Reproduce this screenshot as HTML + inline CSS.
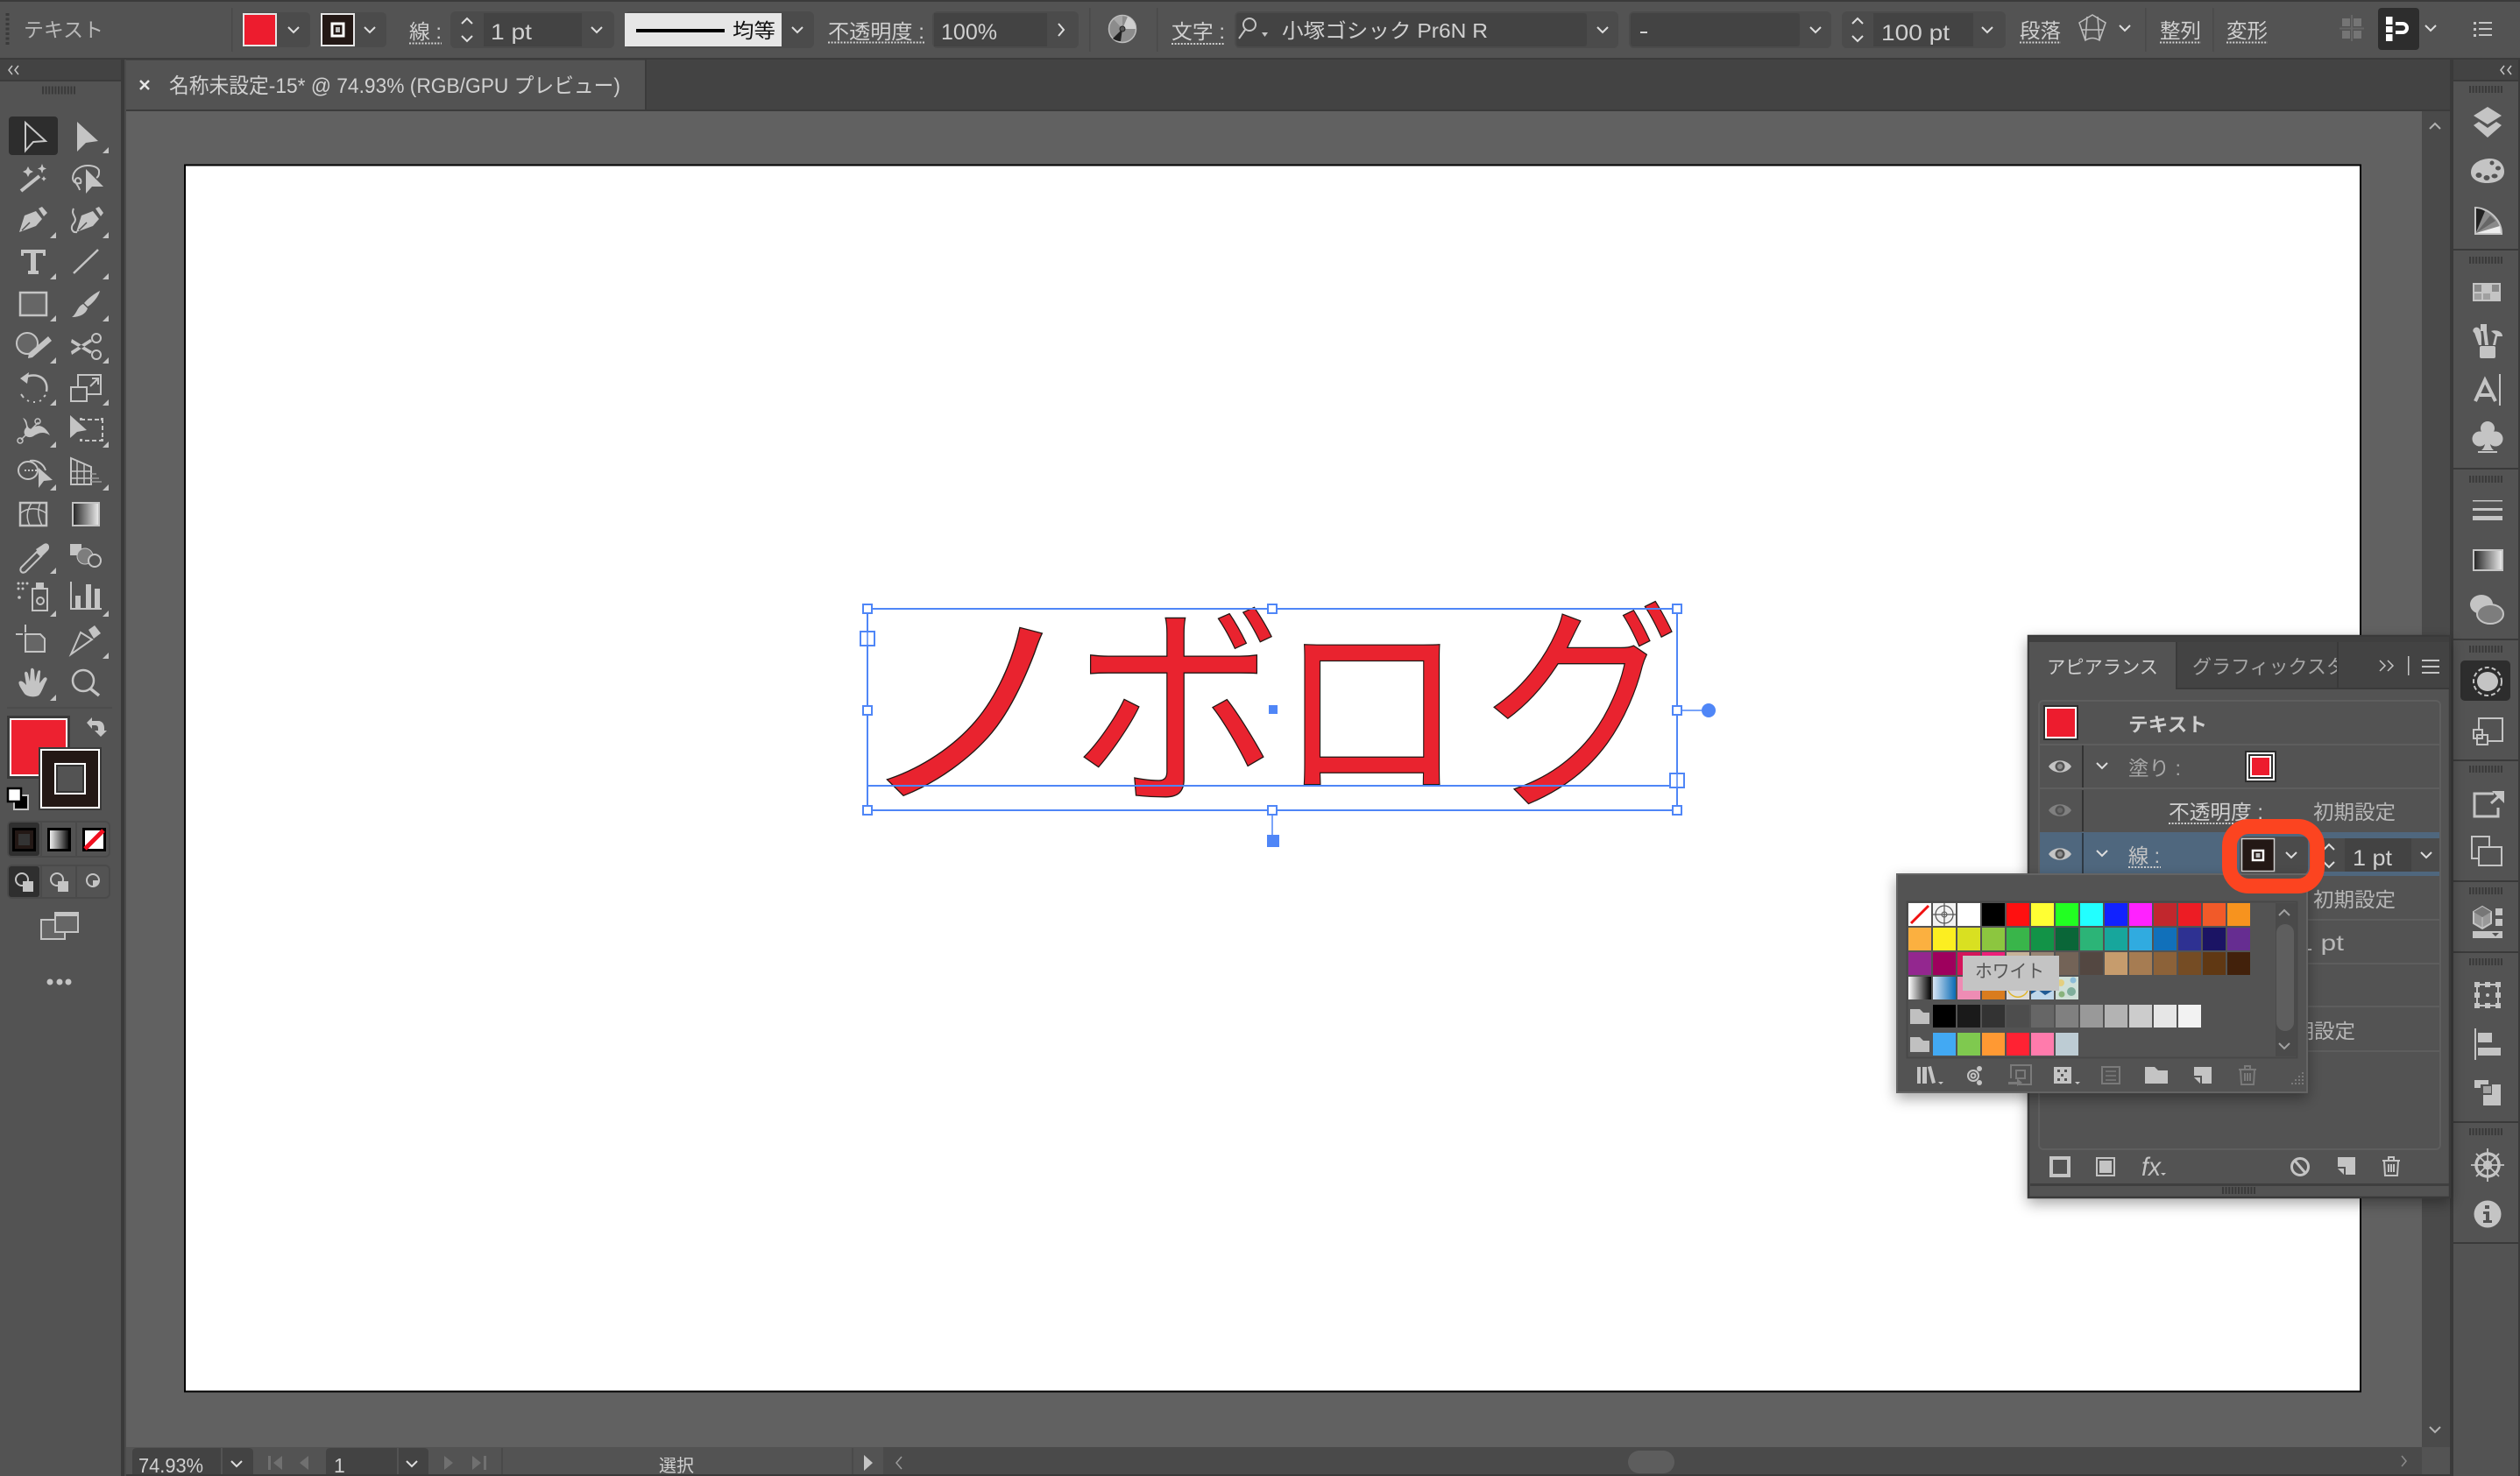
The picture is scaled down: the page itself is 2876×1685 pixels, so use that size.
<!DOCTYPE html>
<html lang="ja"><head><meta charset="utf-8"><title>Illustrator</title>
<style>
html,body{margin:0;padding:0;background:#535353;width:2876px;height:1685px;overflow:hidden}
svg{display:block}
text{font-family:"Liberation Sans","Noto Sans CJK JP",sans-serif;fill:#d0d0d0;font-size:23px}
.i{fill:#c4c4c4}
.s{fill:none;stroke:#c4c4c4;stroke-width:2}
.d{fill:none;stroke:#d0d0d0;stroke-width:2;stroke-dasharray:2 1.6}
.b{fill:#fff;stroke:#4f86f7;stroke-width:2}
.l{font-size:25px}
.k{fill:#e9232f;font-family:"Noto Sans CJK JP",sans-serif;font-size:231px;stroke:#231815;stroke-width:1.2}
</style></head><body>
<svg xmlns="http://www.w3.org/2000/svg" width="2876" height="1685" viewBox="0 0 2876 1685">
<defs>
<path id="cv" d="M-6 -3L0 3L6 -3" fill="none" stroke="#dedede" stroke-width="2"/>
<path id="cu" d="M-6 3L0 -3L6 3" fill="none" stroke="#dedede" stroke-width="2"/>
<path id="tr" d="M7 0V7H0Z" fill="#c4c4c4"/>
<g id="eye"><path d="M-13 0C-7 -9 7 -9 13 0C7 9 -7 9 -13 0Z" fill="#c4c4c4"/><circle r="5.5" fill="#535353"/><circle r="3" fill="#8c8c8c"/></g>
<linearGradient id="g1" x1="0" x2="1" y1="0" y2="0"><stop offset="0" stop-color="#222"/><stop offset="1" stop-color="#eee"/></linearGradient>
<linearGradient id="g2" x1="0" x2="1" y1="0" y2="0"><stop offset="0" stop-color="#fff"/><stop offset="1" stop-color="#000"/></linearGradient>
<linearGradient id="g3" x1="0" x2="1" y1="0" y2="0"><stop offset="0" stop-color="#d9e6f5"/><stop offset="1" stop-color="#0b6cb5"/></linearGradient>
<filter id="sh" x="-10%" y="-10%" width="120%" height="120%"><feDropShadow dx="0" dy="6" stdDeviation="8" flood-color="#000" flood-opacity=".35"/></filter>
<clipPath id="tab2"><rect x="2490" y="735" width="177" height="50"/></clipPath>
</defs>

<rect width="2876" height="1685" fill="#535353"/>
<rect width="2876" height="2" fill="#3b3b3b"/>
<rect y="66" width="2876" height="2" fill="#3b3b3b"/>
<!-- tab bar -->
<rect x="143" y="68" width="2653" height="57" fill="#434343"/>
<rect x="143" y="125" width="2653" height="2" fill="#3b3b3b"/>
<rect x="143" y="69" width="593" height="56" fill="#535353"/>
<rect x="736" y="68" width="2" height="57" fill="#3b3b3b"/>
<path d="M160 92L170 102M170 92L160 102" stroke="#e6e6e6" stroke-width="2.5" fill="none"/>
<text x="193" y="106" textLength="515" lengthAdjust="spacingAndGlyphs" style="font-size:24px">名称未設定-15* @ 74.93% (RGB/GPU プレビュー)</text>

<!-- canvas -->
<rect x="144" y="127" width="2620" height="1525" fill="#616161"/>
<rect x="2764" y="127" width="32" height="1525" fill="#4a4a4a"/>
<use href="#cu" x="2779" y="144" style="opacity:.7"/>
<use href="#cv" x="2779" y="1632" style="opacity:.7"/>
<rect x="211" y="188.5" width="2483" height="1400" fill="#fff" stroke="#000" stroke-width="2"/>

<!-- left panel -->
<rect x="0" y="68" width="138" height="1617" fill="#535353"/>
<rect x="0" y="68" width="138" height="23" fill="#434343"/>
<rect x="0" y="91" width="138" height="2" fill="#3b3b3b"/>
<rect x="138" y="68" width="4" height="1617" fill="#3a3a3a"/>
<rect x="142" y="68" width="2" height="1617" fill="#4b4b4b"/>
<path d="M14 75L10 80L14 85M21 75L17 80L21 85" fill="none" stroke="#c4c4c4" stroke-width="1.5"/>
<line x1="48" x2="86" y1="103" y2="103" stroke="#3a3a3a" stroke-width="9" stroke-dasharray="2 1.6"/>

<!-- top bar -->
<line x1="8.5" x2="8.5" y1="15" y2="52" stroke="#3a3a3a" stroke-width="4" stroke-dasharray="3 2.5"/>
<text x="27" y="42" textLength="91" lengthAdjust="spacingAndGlyphs" style="fill:#b8b8b8">テキスト</text>
<rect x="264" y="9" width="1.5" height="50" fill="#4a4a4a"/>
<rect x="276" y="14" width="78" height="40" rx="5" fill="#4b4b4b"/>
<rect x="278" y="16" width="37" height="36" fill="#ed1c2e" stroke="#e6e6e6" stroke-width="2"/>
<use href="#cv" x="335" y="34"/>
<rect x="365" y="14" width="76" height="40" rx="5" fill="#4b4b4b"/>
<rect x="367" y="16" width="37" height="36" fill="#231815" stroke="#e6e6e6" stroke-width="2"/>
<rect x="379" y="27" width="13" height="14" fill="none" stroke="#fff" stroke-width="3"/><rect x="383" y="31" width="5" height="6" fill="#bdbdbd"/>
<use href="#cv" x="422" y="34"/>
<text x="467" y="44" textLength="37" lengthAdjust="spacingAndGlyphs">線 :</text>
<line class="d" x1="467" x2="504" y1="49.5" y2="49.5"/>
<rect x="514" y="13" width="187" height="42" rx="6" fill="#4b4b4b"/>
<use href="#cu" x="533" y="24"/><use href="#cv" x="533" y="44"/>
<rect x="552" y="15" width="112" height="38" fill="#434343"/>
<text class="l" x="560" y="45" textLength="47" lengthAdjust="spacingAndGlyphs">1 pt</text>
<use href="#cv" x="681" y="34"/>
<rect x="713" y="13" width="216" height="42" rx="6" fill="#4b4b4b"/>
<rect x="713" y="15" width="179" height="38" fill="#e6e6e6"/>
<rect x="726" y="33" width="101" height="4" fill="#000"/>
<text x="836" y="43" textLength="49" lengthAdjust="spacingAndGlyphs" style="fill:#111">均等</text>
<use href="#cv" x="910" y="34"/>
<text x="945" y="44" textLength="110" lengthAdjust="spacingAndGlyphs">不透明度 :</text>
<line class="d" x1="945" x2="1055" y1="48.5" y2="48.5"/>
<rect x="1064" y="13" width="167" height="42" rx="6" fill="#4b4b4b"/>
<rect x="1066" y="15" width="129" height="38" fill="#434343"/>
<text class="l" x="1074" y="45" textLength="64" lengthAdjust="spacingAndGlyphs">100%</text>
<path d="M1208 27L1214 34L1208 41" fill="none" stroke="#dedede" stroke-width="2"/>
<rect x="1243" y="9" width="1.5" height="50" fill="#4a4a4a"/>
<circle cx="1281" cy="33" r="15.5" fill="#8c8c8c" stroke="#bdbdbd" stroke-width="1.5"/>
<path d="M1281 33L1287 19A15 15 0 0 1 1296 33Z" fill="#cfcfcf"/><path d="M1281 33L1270 44A15 15 0 0 0 1279 47Z" fill="#222"/><path d="M1281 33L1271 22A15 15 0 0 1 1281 18Z" fill="#a8a8a8"/>
<circle cx="1281" cy="33" r="3" fill="#555" stroke="#222"/>
<rect x="1320" y="9" width="1.5" height="50" fill="#4a4a4a"/>
<text x="1337" y="44" textLength="61" lengthAdjust="spacingAndGlyphs">文字 :</text>
<line class="d" x1="1337" x2="1398" y1="50" y2="50"/>
<rect x="1409" y="13" width="438" height="42" rx="6" fill="#4b4b4b"/>
<rect x="1411" y="15" width="400" height="38" rx="3" fill="#434343"/>
<circle cx="1426" cy="28" r="7" class="s"/><path d="M1421 34L1414 44" class="s"/><path d="M1440 37H1447L1443.5 42Z" class="i"/>
<text x="1463" y="43" textLength="235" lengthAdjust="spacingAndGlyphs">小塚ゴシック Pr6N R</text>
<use href="#cv" x="1829" y="34"/>
<rect x="1859" y="13" width="231" height="42" rx="6" fill="#4b4b4b"/>
<rect x="1861" y="15" width="193" height="38" rx="3" fill="#434343"/>
<rect x="1872" y="36" width="8" height="2" fill="#d4d4d4"/>
<use href="#cv" x="2072" y="34"/>
<rect x="2102" y="13" width="187" height="42" rx="6" fill="#4b4b4b"/>
<use href="#cu" x="2120" y="24"/><use href="#cv" x="2120" y="44"/>
<rect x="2138" y="15" width="114" height="38" fill="#434343"/>
<text class="l" x="2147" y="46" textLength="78" lengthAdjust="spacingAndGlyphs">100 pt</text>
<use href="#cv" x="2268" y="34"/>
<text x="2305" y="43" textLength="47" lengthAdjust="spacingAndGlyphs">段落</text>
<line class="d" x1="2305" x2="2352" y1="48.5" y2="48.5"/>
<g fill="none" stroke="#bcbcbc" stroke-width="1.6"><path d="M2373 26L2388 17L2403 26L2396 46Q2388 41 2380 46Z"/><path d="M2382 19L2380 45M2394 19L2396 45M2375 34H2401"/></g>
<use href="#cv" x="2425" y="32"/>
<rect x="2448" y="9" width="1.5" height="50" fill="#4a4a4a"/>
<text x="2465" y="43" textLength="47" lengthAdjust="spacingAndGlyphs">整列</text>
<line class="d" x1="2465" x2="2512" y1="48.5" y2="48.5"/>
<rect x="2525" y="9" width="1.5" height="50" fill="#4a4a4a"/>
<text x="2541" y="43" textLength="47" lengthAdjust="spacingAndGlyphs">変形</text>
<line class="d" x1="2541" x2="2588" y1="48.5" y2="48.5"/>
<g fill="#757575"><rect x="2673" y="21" width="9" height="9"/><rect x="2686" y="21" width="9" height="9"/><rect x="2673" y="35" width="9" height="9"/><rect x="2686" y="35" width="9" height="9"/><rect x="2670" y="31.5" width="28" height="2" fill="#666"/><rect x="2683" y="17" width="2" height="30" fill="#666"/></g>
<rect x="2714" y="9" width="47" height="48" rx="4" fill="#2d2d2d"/>
<g fill="#fff"><rect x="2723" y="19" width="7.5" height="9"/><rect x="2723" y="30" width="7.5" height="7"/><rect x="2723" y="39" width="7.5" height="8"/></g>
<path d="M2734 27H2742A5 5 0 0 1 2742 37H2734" fill="none" stroke="#fff" stroke-width="4"/>
<use href="#cv" x="2774" y="32"/>
<g fill="#c4c4c4"><rect x="2823" y="25" width="3" height="3"/><rect x="2823" y="32" width="3" height="3"/><rect x="2823" y="39" width="3" height="3"/><rect x="2829" y="25" width="15" height="2"/><rect x="2829" y="32" width="15" height="2"/><rect x="2829" y="39" width="15" height="2"/></g>

<!-- tools -->
<rect x="10" y="133" width="56" height="44" rx="4" fill="#2d2d2d"/>
<path d="M29 140L52 161L38 162L29 172Z" fill="none" stroke="#c8c8c8" stroke-width="2"/>
<path d="M88 139L112 161L98 163L88 173Z" class="i"/>
<!-- wand -->
<path d="M24 218L45 201" fill="none" stroke="#c4c4c4" stroke-width="4"/>
<path d="M32 190L34 194L38 196L34 198L32 202L30 198L26 196L30 194ZM48 187L49.5 191L53 192.5L49.5 194L48 198L46.5 194L43 192.5L46.5 191ZM50 201L51 203L53 204L51 205L50 207L49 205L47 204L49 203Z" class="i"/>
<!-- lasso -->
<path d="M83 204C83 194 92 189 100 189C108 189 114 192 113 197C113 200 112 202 110 203" class="s"/>
<path d="M83 204C84 209 88 210 92 209C94 204 88 201 86 205C85 209 90 212 91 217" class="s"/>
<path d="M98 193L118 213L105 213L98 221Z" class="i"/>
<!-- pen -->
<path d="M22 265L28 246L41 241L48 250L41 258Z" class="i"/><path d="M44 238L48 236L54 243L50 247Z" class="i"/><path d="M25 263L34 254" stroke="#535353" stroke-width="1.5"/>
<path d="M87 265L93 246L106 241L113 250L106 258Z" class="i"/><path d="M109 238L113 236L118 243L115 247Z" class="i"/><path d="M84 238C80 246 90 248 84 255C80 260 82 266 88 265" class="s"/><path d="M90 263L99 254" stroke="#535353" stroke-width="1.5"/>
<!-- type -->
<path d="M24 285H52V292H49V289H41V309H44V313H32V309H35V289H27V292H24Z" class="i"/>
<path d="M84 312L112 285" fill="none" stroke="#c4c4c4" stroke-width="2.5"/>
<!-- rect / brush -->
<rect x="23" y="334" width="30" height="26" fill="#666" stroke="#c4c4c4" stroke-width="2.5"/>
<path d="M114 332C112 340 104 348 100 350L96 346C100 341 108 335 114 332Z" class="i"/><path d="M95 347L100 352C98 358 92 362 82 362C88 358 88 350 95 347Z" class="i"/>
<!-- blob / scissors -->
<circle cx="31" cy="392" r="12" fill="#666" stroke="#c4c4c4" stroke-width="2"/>
<path d="M32 409L33 403L55 384L59 389L37 408Z" class="i"/>
<circle cx="110" cy="386" r="5" class="s"/><circle cx="110" cy="405" r="5" class="s"/>
<path d="M82 387L105 401L103 404L81 391ZM82 405L105 390L103 387L81 401Z" class="i"/>
<!-- rotate / scale -->
<path d="M28 431C42 424 56 432 53 447" class="s" style="stroke-width:2.5"/><path d="M23 432L33 425L31 438Z" class="i"/>
<path d="M24 450L27 454M31 457L33 458M38 459H40M45 458L47 457M50 453L52 451" fill="none" stroke="#c4c4c4" stroke-width="2"/>
<path d="M89 442V428H115V450H100" class="s"/><rect x="81" y="442" width="18" height="16" class="s"/><path d="M103 441L111 433M105 432H112V439" class="s"/>
<!-- warp / free transform -->
<path d="M26 477C34 480 28 488 36 490C42 484 50 484 57 497C50 492 44 494 38 498C30 502 24 494 30 488C30 484 28 480 26 477Z" class="i"/>
<path d="M24 502L44 482" class="s" style="stroke-width:1.5"/><circle cx="23" cy="503" r="3" class="s" style="stroke-width:1.5"/><circle cx="43" cy="481" r="3" class="s" style="stroke-width:1.5"/>
<path d="M80 474L99 491L88 493L80 500Z" class="i"/>
<path d="M92 479H117V503H92" class="s" stroke-dasharray="5 3"/><g class="i"><rect x="91" y="477" width="3" height="3"/><rect x="115" y="477" width="3" height="3"/><rect x="115" y="501" width="3" height="3"/><rect x="91" y="501" width="3" height="3"/></g>
<!-- shape builder / persp -->
<ellipse cx="32" cy="537" rx="11" ry="10" class="s"/><path d="M34 526A16 16 0 0 1 52 537" class="s"/><path d="M28 537H44" stroke="#c4c4c4" stroke-width="2" stroke-dasharray="2 2"/>
<path d="M44 534L60 548L50 549L44 557Z" class="i"/>
<path d="M81 523L104 533V553L81 553Z" class="s"/><path d="M88 526V553M96 530V553M81 538H104M81 546H104" class="s" style="stroke-width:1.5"/>
<path d="M104 541H110M104 546H113M104 550H116" fill="none" stroke="#999" stroke-width="1.5"/>
<!-- mesh / gradient -->
<rect x="23" y="574" width="30" height="26" fill="none" stroke="#c4c4c4" stroke-width="2.5"/>
<path d="M23 586C34 578 44 580 53 586M36 574C30 584 30 592 34 600M46 574C42 584 44 592 48 600" class="s" style="stroke-width:1.5"/>
<rect x="83" y="574" width="30" height="26" fill="url(#g1)" stroke="#c4c4c4" stroke-width="2"/>
<!-- eyedropper / blend -->
<path d="M24 648L42 630L47 635L29 653C25 655 22 652 24 648Z" class="s"/><path d="M41 627L50 621C56 618 58 626 54 629L47 636Z" class="i"/>
<rect x="80" y="621" width="13" height="13" class="i"/><ellipse cx="97" cy="635" rx="9" ry="9" fill="#7d7d7d" stroke="#c4c4c4" stroke-width="1"/><circle cx="108" cy="640" r="7" fill="#535353" stroke="#c4c4c4" stroke-width="2"/>
<!-- symbol / chart -->
<g class="i"><circle cx="21" cy="666" r="1.5"/><circle cx="26" cy="666" r="1.5"/><circle cx="31" cy="666" r="1.5"/><circle cx="21" cy="672" r="1.5"/><circle cx="26" cy="672" r="1.5"/><circle cx="22" cy="682" r="1.8"/></g>
<rect x="37" y="672" width="17" height="25" class="s"/><rect x="41" y="665" width="9" height="7" class="i"/><circle cx="46" cy="686" r="4" class="s"/>
<path d="M81 664V695H116" class="s"/><g class="i"><rect x="86" y="680" width="6" height="14"/><rect x="98" y="667" width="6" height="27"/><rect x="108" y="672" width="6" height="22"/></g>
<!-- artboard / slice -->
<path d="M29 713V722M18 724H26" class="s"/>
<path d="M29 724H46L51 729V744H29Z" fill="#666" stroke="#c4c4c4" stroke-width="2"/>
<path d="M81 747L92 722L105 730Z" class="s"/><path d="M101 719L108 714L115 723L107 729Z" class="i"/>
<!-- hand / zoom -->
<path d="M28 792C24 786 20 780 22 778C25 776 28 780 30 782L28 769C28 766 31 766 32 769L34 778L35 765C35 762 38 762 39 765L40 778L43 767C44 764 47 765 46 768L45 780L50 774C52 772 55 774 53 777C50 782 48 790 44 794C40 796 32 796 28 792Z" class="i"/>
<circle cx="95" cy="777" r="12" fill="none" stroke="#c4c4c4" stroke-width="2.5"/><path d="M103 786L113 794" fill="none" stroke="#c4c4c4" stroke-width="3.5"/>
<!-- markers -->
<use href="#tr" x="117" y="168"/>
<use href="#tr" x="57" y="265"/><use href="#tr" x="117" y="265"/><use href="#tr" x="57" y="312"/><use href="#tr" x="117" y="312"/>
<use href="#tr" x="57" y="360"/><use href="#tr" x="117" y="360"/><use href="#tr" x="57" y="408"/><use href="#tr" x="117" y="408"/>
<use href="#tr" x="57" y="456"/><use href="#tr" x="117" y="456"/><use href="#tr" x="57" y="504"/><use href="#tr" x="117" y="504"/>
<use href="#tr" x="57" y="553"/><use href="#tr" x="117" y="553"/><use href="#tr" x="57" y="648"/>
<use href="#tr" x="57" y="697"/><use href="#tr" x="117" y="697"/><use href="#tr" x="117" y="745"/><use href="#tr" x="57" y="793"/>
<rect x="8" y="807" width="120" height="2" fill="#4c4c4c"/>
<!-- fill/stroke -->
<rect x="8" y="817" width="72" height="72" fill="#3a3a3a"/>
<rect x="11" y="820" width="66" height="66" fill="#fff"/>
<rect x="13" y="822" width="62" height="62" fill="#ed2130"/>
<rect x="44" y="853" width="72" height="72" fill="#3a3a3a"/>
<rect x="46" y="855" width="68" height="68" fill="#fff"/>
<rect x="48" y="857" width="64" height="64" fill="#231815"/>
<rect x="63" y="872" width="34" height="34" fill="#535353" stroke="#fff" stroke-width="2"/>
<rect x="65" y="874" width="30" height="30" fill="none" stroke="#333" stroke-width="2"/>
<path d="M99 825L105 819V823H112C117 823 119 827 119 831V834H122L115 841L108 834H112V832C112 829 111 828 108 828H105V832Z" class="i"/>
<rect x="16" y="908" width="16" height="16" fill="#000" stroke="#c4c4c4" stroke-width="2"/>
<rect x="9" y="900" width="15" height="15" fill="#fff" stroke="#000" stroke-width="2.5"/>
<!-- mode groups -->
<rect x="9" y="938" width="116" height="40" rx="5" fill="none" stroke="#4a4a4a" stroke-width="2"/>
<rect x="10" y="939" width="35" height="38" rx="3" fill="#2f2f2f"/>
<rect x="46" y="938" width="2" height="40" fill="#4a4a4a"/><rect x="86" y="938" width="2" height="40" fill="#4a4a4a"/>
<rect x="15.5" y="946.5" width="24" height="24" fill="#231815" stroke="#000" stroke-width="3"/><rect x="21" y="952" width="13" height="13" fill="#333"/>
<rect x="55.5" y="946.5" width="24" height="24" fill="url(#g2)" stroke="#000" stroke-width="3"/>
<rect x="95.5" y="946.5" width="24" height="24" fill="#fff" stroke="#000" stroke-width="3"/><path d="M97 969L118 948" stroke="#f01020" stroke-width="5"/>
<rect x="9" y="988" width="116" height="37" rx="5" fill="none" stroke="#4a4a4a" stroke-width="2"/>
<rect x="10" y="989" width="35" height="35" rx="3" fill="#2f2f2f"/>
<rect x="46" y="988" width="2" height="37" fill="#4a4a4a"/><rect x="86" y="988" width="2" height="37" fill="#4a4a4a"/>
<circle cx="25" cy="1004" r="7" fill="none" stroke="#c4c4c4" stroke-width="2"/><rect x="26" y="1006" width="12" height="12" class="i"/>
<circle cx="65" cy="1004" r="7" fill="none" stroke="#c4c4c4" stroke-width="2"/><rect x="66" y="1006" width="12" height="12" class="i"/>
<circle cx="106" cy="1005" r="7" fill="none" stroke="#c4c4c4" stroke-width="2"/><path d="M106 1005H113A7 7 0 0 1 106 1012Z" class="i"/>
<rect x="47" y="1050" width="27" height="22" fill="#666" stroke="#c4c4c4" stroke-width="2"/>
<rect x="63" y="1042" width="26" height="22" fill="#666" stroke="#c4c4c4" stroke-width="2"/><rect x="62" y="1041" width="28" height="5" class="i"/>
<circle cx="57" cy="1121" r="3.5" class="i"/><circle cx="68" cy="1121" r="3.5" class="i"/><circle cx="78" cy="1121" r="3.5" class="i"/>

<!-- status bar -->
<rect x="144" y="1652" width="2652" height="31" fill="#535353"/>
<rect x="144" y="1683" width="2652" height="2" fill="#3a3a3a"/>
<rect x="1008" y="1652" width="1756" height="31" fill="#4a4a4a"/>
<rect x="1858" y="1656" width="53" height="26" rx="13" fill="#5d5d5d"/>
<path d="M2741 1662L2746 1668L2741 1674" fill="none" stroke="#8a8a8a" stroke-width="1.5"/>
<path d="M151 1683V1658Q151 1653 156 1653H284Q289 1653 289 1658V1683Z" fill="#434343"/>
<rect x="252" y="1653" width="2" height="30" fill="#535353"/>
<text x="158" y="1681" textLength="74" lengthAdjust="spacingAndGlyphs" style="font-size:23px">74.93%</text>
<use href="#cv" x="270" y="1671" />
<path d="M372 1683V1658Q372 1653 377 1653H484Q489 1653 489 1658V1683Z" fill="#434343"/>
<rect x="453" y="1653" width="2" height="30" fill="#535353"/>
<text x="381" y="1681" style="font-size:23px">1</text>
<use href="#cv" x="470" y="1671"/>
<g fill="#707070"><rect x="306" y="1662" width="3" height="16"/><path d="M322 1662V1678L312 1670ZM352 1662V1678L342 1670ZM507 1662V1678L517 1670ZM539 1662V1678L549 1670Z"/><rect x="552" y="1662" width="3" height="16"/></g>
<rect x="572" y="1653" width="2" height="30" fill="#4a4a4a"/>
<text x="752" y="1680" textLength="40" lengthAdjust="spacingAndGlyphs" style="font-size:20px">選択</text>
<rect x="972" y="1653" width="2" height="30" fill="#4a4a4a"/>
<path d="M986 1661V1679L996 1670Z" class="i"/>
<path d="M1029 1663L1023 1670L1029 1677" fill="none" stroke="#9a9a9a" stroke-width="1.5"/>

<!-- artwork -->
<text class="k" transform="translate(975 904) scale(1.157 1.09)">ノ</text>
<text class="k" transform="translate(1222.5 899) scale(1.04 1.087)">ボ</text>
<text class="k" transform="translate(1457 894) scale(.936 1)">ロ</text>
<text class="k" transform="translate(1692 900) scale(.976 1.1)">グ</text>
<rect x="990" y="695" width="924" height="230" fill="none" stroke="#4f86f7" stroke-width="2"/>
<line x1="990" x2="1914" y1="897" y2="897" stroke="#4f86f7" stroke-width="2"/>
<line x1="1452" x2="1452" y1="925" y2="955" stroke="#4f86f7" stroke-width="1.5"/>
<line x1="1914" x2="1942" y1="811" y2="811" stroke="#4f86f7" stroke-width="1.5"/>
<circle cx="1950" cy="811" r="8" fill="#4f86f7"/>
<rect x="1446" y="953" width="14" height="14" fill="#4f86f7"/>
<rect x="1448" y="805" width="10" height="10" fill="#4f86f7"/>
<rect class="b" x="985" y="690" width="10" height="10"/><rect class="b" x="1447" y="690" width="10" height="10"/><rect class="b" x="1909" y="690" width="10" height="10"/>
<rect class="b" x="985" y="806" width="10" height="10"/><rect class="b" x="1909" y="806" width="10" height="10"/>
<rect class="b" x="985" y="920" width="10" height="10"/><rect class="b" x="1447" y="920" width="10" height="10"/><rect class="b" x="1909" y="920" width="10" height="10"/>
<rect class="b" x="982" y="721" width="16" height="16"/><line x1="990" x2="990" y1="721" y2="737" stroke="#4f86f7" stroke-width="1.5"/>
<rect class="b" x="1906" y="883" width="16" height="16"/><line x1="1914" x2="1914" y1="883" y2="899" stroke="#4f86f7" stroke-width="1.5"/>

<!-- right dock -->
<rect x="2796" y="68" width="4" height="1617" fill="#3a3a3a"/>
<rect x="2800" y="68" width="74" height="1617" fill="#535353"/>
<rect x="2874" y="68" width="2" height="1617" fill="#3a3a3a"/>
<rect x="2800" y="68" width="74" height="23" fill="#434343"/>
<path d="M2858 75L2854 80L2858 85M2866 75L2862 80L2866 85" fill="none" stroke="#c4c4c4" stroke-width="1.5"/>
<g fill="#3a3a3a"><rect x="2800" y="91" width="74" height="2"/><rect x="2800" y="284" width="74" height="2"/><rect x="2800" y="534" width="74" height="2"/><rect x="2800" y="729" width="74" height="2"/><rect x="2800" y="867" width="74" height="2"/><rect x="2800" y="1005" width="74" height="2"/><rect x="2800" y="1086" width="74" height="2"/><rect x="2800" y="1280" width="74" height="2"/><rect x="2800" y="1418" width="74" height="2"/></g>
<g stroke="#3a3a3a" stroke-width="8" stroke-dasharray="2 1.6"><line x1="2818" x2="2856" y1="102" y2="102"/><line x1="2818" x2="2856" y1="297" y2="297"/><line x1="2818" x2="2856" y1="547" y2="547"/><line x1="2818" x2="2856" y1="741" y2="741"/><line x1="2818" x2="2856" y1="878" y2="878"/><line x1="2818" x2="2856" y1="1017" y2="1017"/><line x1="2818" x2="2856" y1="1098" y2="1098"/><line x1="2818" x2="2856" y1="1292" y2="1292"/></g>
<path d="M2839 122L2855 132L2839 142L2823 132Z" class="i"/><path d="M2823 143L2829 139L2839 146L2849 139L2855 143L2839 157Z" class="i"/>
<path d="M2820 197C2820 186 2832 181 2842 181C2852 181 2858 188 2858 196C2858 204 2850 209 2838 209C2828 209 2820 204 2820 197Z" class="i"/>
<g fill="#535353"><ellipse cx="2829" cy="200" rx="3.5" ry="3"/><ellipse cx="2838" cy="203" rx="3.5" ry="3"/><ellipse cx="2847" cy="201" rx="3.5" ry="2.5"/><ellipse cx="2851" cy="192" rx="3" ry="2.5"/><circle cx="2844" cy="186" r="2.5"/></g>
<path d="M2825 237C2842 238 2855 252 2855 267H2825Z" fill="#8a8a8a" stroke="#c4c4c4" stroke-width="2"/><path d="M2826 238C2831 238 2834 240 2836 241L2826 265Z" fill="#222"/><path d="M2826 266L2853 258L2854 266Z" fill="#eee"/><path d="M2826 266L2842 246L2848 252Z" fill="#666"/>
<rect x="2822" y="323" width="32" height="21" class="i"/><g fill="#8a8a8a"><rect x="2824" y="325" width="8" height="8"/><rect x="2844" y="325" width="8" height="8"/><rect x="2834" y="335" width="8" height="7" fill="#a0a0a0"/><rect x="2824" y="335" width="8" height="7" fill="#a0a0a0"/></g>
<rect x="2830" y="395" width="18" height="14" rx="2" class="i"/><path d="M2836 394L2834 378H2831V370H2838V378L2840 394ZM2829 394L2824 380C2820 378 2824 372 2828 374C2832 376 2832 382 2832 394ZM2845 394L2848 382L2843 378C2848 376 2856 378 2856 384L2850 384L2848 394Z" class="i"/>
<path d="M2825 458L2836 434L2848 458M2830 451H2843" fill="none" stroke="#c4c4c4" stroke-width="4"/><rect x="2852" y="427" width="2" height="36" class="i"/>
<circle cx="2839" cy="489" r="8" class="i"/><circle cx="2830" cy="501" r="8.5" class="i"/><circle cx="2848" cy="501" r="8.5" class="i"/><path d="M2837 495H2841C2841 505 2842 511 2846 514H2832C2836 511 2837 505 2837 495Z" class="i"/><rect x="2828" y="515" width="22" height="2" class="i"/>
<rect x="2822" y="571" width="34" height="1.5" class="i"/><rect x="2822" y="580" width="34" height="3" class="i"/><rect x="2822" y="589" width="34" height="5" class="i"/>
<rect x="2823" y="628" width="33" height="23" fill="url(#g1)" stroke="#c4c4c4" stroke-width="2"/>
<ellipse cx="2832" cy="690" rx="13" ry="11" class="i"/><ellipse cx="2842" cy="701" rx="15" ry="11" fill="#7d7d7d" stroke="#c4c4c4" stroke-width="2"/>
<rect x="2808" y="754" width="57" height="46" rx="5" fill="#2d2d2d"/>
<ellipse cx="2839" cy="778" rx="12" ry="11" class="i"/><ellipse cx="2839" cy="778" rx="16" ry="16" fill="none" stroke="#c4c4c4" stroke-width="2" stroke-dasharray="5 3"/>
<path d="M2829 832V820H2856V846H2839" class="s"/><rect x="2823" y="833" width="10" height="10" class="s"/><rect x="2827" y="839" width="12" height="11" class="s"/>
<path d="M2846 906H2824V932H2851V922" fill="none" stroke="#c4c4c4" stroke-width="3"/><path d="M2843 917L2853 908" fill="none" stroke="#c4c4c4" stroke-width="3"/><path d="M2844 903H2858V917Z" class="i"/>
<path d="M2829 980H2821V955H2841V967" class="s"/><rect x="2829" y="967" width="26" height="21" class="s"/>
<path d="M2823 1041L2833 1035L2843 1041V1054L2833 1060L2823 1054Z" fill="#999" stroke="#c4c4c4" stroke-width="2"/><path d="M2823 1041L2833 1047L2843 1041L2833 1035Z" fill="#777"/><path d="M2833 1047V1060" stroke="#c4c4c4"/>
<rect x="2848" y="1037" width="8" height="8" class="i"/><rect x="2848" y="1049" width="8" height="8" class="i"/><rect x="2822" y="1063" width="34" height="8" class="i"/><path d="M2844 1065H2852L2848 1069Z" fill="#535353"/>
<rect x="2827" y="1124" width="24" height="24" fill="none" stroke="#c4c4c4" stroke-width="2"/>
<g class="i"><rect x="2824" y="1121" width="6" height="6"/><rect x="2836" y="1121" width="6" height="6"/><rect x="2848" y="1121" width="6" height="6"/><rect x="2824" y="1133" width="6" height="6"/><rect x="2848" y="1133" width="6" height="6"/><rect x="2824" y="1145" width="6" height="6"/><rect x="2836" y="1145" width="6" height="6"/><rect x="2848" y="1145" width="6" height="6"/><circle cx="2839" cy="1136" r="2"/></g>
<rect x="2824" y="1174" width="2" height="36" class="i"/><rect x="2828" y="1179" width="16" height="11" class="i"/><rect x="2828" y="1196" width="26" height="9" class="i"/>
<path d="M2824 1233H2840V1238H2831V1242H2824Z" class="i"/><rect x="2834" y="1240" width="9" height="8" fill="#c4c4c4" opacity=".7"/><path d="M2834 1250H2844V1238H2854V1262H2834Z" class="i"/>
<circle cx="2839" cy="1330" r="13" fill="none" stroke="#c4c4c4" stroke-width="3.5"/><circle cx="2839" cy="1330" r="4" fill="none" stroke="#c4c4c4" stroke-width="2.5"/>
<path d="M2820 1330H2858M2839 1311V1349M2826 1317L2852 1343M2852 1317L2826 1343" fill="none" stroke="#c4c4c4" stroke-width="1.8"/>
<circle cx="2839" cy="1386" r="15.5" class="i"/><rect x="2836" y="1376" width="5" height="4" fill="#535353"/><path d="M2834 1383H2841V1393H2844V1396H2834V1393H2837V1386H2834Z" fill="#535353"/>

<!-- appearance panel -->
<g filter="url(#sh)"><rect x="2314" y="725" width="483" height="643" fill="#535353"/></g>
<rect x="2315" y="726" width="481" height="641" fill="#535353" stroke="#3a3a3a" stroke-width="2.5"/>
<rect x="2316" y="727" width="479" height="6" fill="#3f3f3f"/>
<rect x="2316" y="733" width="479" height="53" fill="#434343"/>
<rect x="2316" y="733" width="167" height="54" fill="#535353"/>
<rect x="2483" y="733" width="2" height="54" fill="#3a3a3a"/>
<rect x="2485" y="785" width="310" height="2" fill="#3a3a3a"/>
<rect x="2667" y="733" width="2" height="52" fill="#3a3a3a"/>
<text x="2336" y="769" textLength="127" lengthAdjust="spacingAndGlyphs" style="font-size:21px">アピアランス</text>
<g clip-path="url(#tab2)"><text x="2502" y="769" style="font-size:22px;fill:#a6a6a6">グラフィックスタイル</text></g>
<path d="M2716 754L2722 760L2716 766M2725 754L2731 760L2725 766" fill="none" stroke="#c4c4c4" stroke-width="1.5"/>
<rect x="2748" y="749" width="1.5" height="22" fill="#c4c4c4"/>
<g fill="#c4c4c4"><rect x="2764" y="753" width="20" height="2"/><rect x="2764" y="760" width="20" height="2"/><rect x="2764" y="767" width="20" height="2"/></g>
<rect x="2327" y="800" width="458" height="512" rx="5" fill="none" stroke="#5e5e5e" stroke-width="2"/>
<rect x="2332" y="805" width="40" height="40" fill="#2d2d2d"/><rect x="2334" y="807" width="36" height="36" fill="#fff"/><rect x="2336" y="809" width="32" height="32" fill="#ed1c2e"/>
<text x="2429" y="835" textLength="90" lengthAdjust="spacingAndGlyphs" style="font-weight:bold;font-size:22px;fill:#cfcfcf">テキスト</text>
<g fill="#5e5e5e"><rect x="2328" y="849" width="456" height="2"/><rect x="2328" y="899" width="456" height="2"/><rect x="2328" y="1049" width="456" height="2"/><rect x="2328" y="1099" width="456" height="2"/><rect x="2328" y="1148" width="456" height="2"/><rect x="2328" y="1199" width="456" height="2"/></g>
<rect x="2328" y="950" width="456" height="50" fill="#4f677e"/>
<rect x="2376" y="851" width="2" height="48" fill="#333"/><rect x="2376" y="902" width="2" height="47" fill="#333"/><rect x="2376" y="951" width="2" height="49" fill="#2f3a45"/>
<use href="#eye" x="2351" y="875"/><use href="#eye" x="2351" y="925" opacity=".4"/><use href="#eye" x="2351" y="975"/>
<use href="#cv" x="2399" y="874"/><use href="#cv" x="2399" y="974"/>
<text x="2429" y="885" textLength="60" lengthAdjust="spacingAndGlyphs" style="fill:#a8a8a8">塗り :</text>
<rect x="2562" y="857" width="36" height="36" fill="#2d2d2d"/><rect x="2564" y="859" width="32" height="32" fill="#fff"/><rect x="2566" y="861" width="28" height="28" fill="#2d2d2d"/><rect x="2568" y="863" width="24" height="24" fill="#fff"/><rect x="2570" y="865" width="20" height="20" fill="#ed1c2e"/>
<text x="2475" y="935" textLength="108" lengthAdjust="spacingAndGlyphs">不透明度 :</text>
<line class="d" x1="2475" x2="2553" y1="940" y2="940"/>
<text x="2640" y="935" textLength="94" style="fill:#b8b8b8" lengthAdjust="spacingAndGlyphs">初期設定</text>
<text x="2429" y="985" textLength="36" lengthAdjust="spacingAndGlyphs" style="fill:#c4c4c4">線 :</text>
<line class="d" x1="2429" x2="2466" y1="990" y2="990"/>
<rect x="2556" y="955" width="78" height="43" rx="6" fill="#4b4b4b"/>
<rect x="2558.5" y="957.5" width="37" height="37" fill="#231815" stroke="#cfcfcf" stroke-width="1.5"/>
<rect x="2571" y="971" width="12" height="11" fill="none" stroke="#fff" stroke-width="2.5"/><rect x="2574.5" y="974" width="5" height="5" fill="#bdbdbd"/>
<use href="#cv" x="2615" y="976"/>
<rect x="2644" y="957" width="140" height="38" fill="#4b4b4b"/>
<rect x="2676" y="957" width="76" height="38" fill="#434343"/>
<use href="#cu" x="2658" y="967"/><use href="#cv" x="2658" y="987"/>
<text class="l" x="2685" y="988" textLength="45" lengthAdjust="spacingAndGlyphs">1 pt</text>
<use href="#cv" x="2769" y="976"/>
<text x="2640" y="1035" textLength="94" lengthAdjust="spacingAndGlyphs" style="fill:#b8b8b8">初期設定</text>
<text x="2622" y="1085" textLength="53" lengthAdjust="spacingAndGlyphs" style="fill:#b8b8b8;font-size:25px">1 pt</text>
<text x="2594" y="1185" textLength="94" lengthAdjust="spacingAndGlyphs" style="fill:#b8b8b8">初期設定</text>
<!-- panel bottom -->
<rect x="2341" y="1322" width="20" height="20" fill="none" stroke="#c4c4c4" stroke-width="4"/>
<rect x="2393" y="1322" width="20" height="20" fill="none" stroke="#c4c4c4" stroke-width="2"/><rect x="2396" y="1325" width="14" height="14" class="i"/>
<text x="2444" y="1342" textLength="22" lengthAdjust="spacingAndGlyphs" style="font-style:italic;font-size:30px;fill:#c4c4c4">fx</text>
<path d="M2466 1339H2472L2469 1342Z" class="i"/>
<circle cx="2625" cy="1332" r="9.5" fill="none" stroke="#c4c4c4" stroke-width="3"/><path d="M2619 1325L2631 1339" stroke="#c4c4c4" stroke-width="3"/>
<path d="M2668 1321H2688V1341H2677V1332H2668Z" class="i"/><path d="M2668 1334H2675V1341Z" class="i"/>
<path d="M2719 1325H2739M2726 1325V1321H2732V1325M2721 1325L2722 1342H2736L2737 1325M2726 1329V1338M2729 1329V1338M2732 1329V1338" fill="none" stroke="#c4c4c4" stroke-width="2"/>
<rect x="2317" y="1351" width="478" height="3" fill="#3f3f3f"/>
<line x1="2536" x2="2574" y1="1359" y2="1359" stroke="#3a3a3a" stroke-width="8" stroke-dasharray="2 1.6"/>

<!-- popup -->
<g filter="url(#sh)"><rect x="2164" y="997" width="470" height="251" fill="#535353"/></g>
<rect x="2165" y="998" width="468" height="249" fill="#535353" stroke="#6a6a6a" stroke-width="1.5"/>
<rect x="2176.5" y="1029.5" width="445" height="178" fill="none" stroke="#484848" stroke-width="2"/>
<rect x="2597" y="1031" width="24" height="175" fill="#4a4a4a"/>
<rect x="2598" y="1055" width="20" height="122" rx="10" fill="#5e5e5e"/>
<use href="#cu" x="2607" y="1042" opacity=".6"/><use href="#cv" x="2607" y="1194" opacity=".6"/>
<!-- row 1 -->
<rect x="2178" y="1031" width="26" height="26" fill="#fff"/><path d="M2181 1054L2201 1034" stroke="#f01010" stroke-width="3"/>
<rect x="2206" y="1031" width="26" height="26" fill="#f2f2f2"/><circle cx="2219" cy="1044" r="10" fill="none" stroke="#555" stroke-width="1.2"/><circle cx="2219" cy="1044" r="3" fill="none" stroke="#555"/><path d="M2219 1031V1057M2206 1044H2232" stroke="#555" stroke-width="1.2"/>
<rect x="2234" y="1031" width="26" height="26" fill="#fff"/><rect x="2262" y="1031" width="26" height="26" fill="#000"/>
<rect x="2290" y="1031" width="26" height="26" fill="#ff1010"/><rect x="2318" y="1031" width="26" height="26" fill="#ffff33"/><rect x="2346" y="1031" width="26" height="26" fill="#22ff22"/><rect x="2374" y="1031" width="26" height="26" fill="#22ffff"/><rect x="2402" y="1031" width="26" height="26" fill="#1122ff"/><rect x="2430" y="1031" width="26" height="26" fill="#ff22ff"/><rect x="2458" y="1031" width="26" height="26" fill="#c1272d"/><rect x="2486" y="1031" width="26" height="26" fill="#ed1c24"/><rect x="2514" y="1031" width="26" height="26" fill="#f15a29"/><rect x="2542" y="1031" width="26" height="26" fill="#f7931e"/>
<!-- row 2 -->
<rect x="2178" y="1059" width="26" height="26" fill="#fbb040"/><rect x="2206" y="1059" width="26" height="26" fill="#fcee21"/><rect x="2234" y="1059" width="26" height="26" fill="#d9e021"/><rect x="2262" y="1059" width="26" height="26" fill="#8cc63f"/><rect x="2290" y="1059" width="26" height="26" fill="#39b54a"/><rect x="2318" y="1059" width="26" height="26" fill="#129347"/><rect x="2346" y="1059" width="26" height="26" fill="#0a6638"/><rect x="2374" y="1059" width="26" height="26" fill="#2cb477"/><rect x="2402" y="1059" width="26" height="26" fill="#17a69c"/><rect x="2430" y="1059" width="26" height="26" fill="#30abe0"/><rect x="2458" y="1059" width="26" height="26" fill="#1170ba"/><rect x="2486" y="1059" width="26" height="26" fill="#2e3192"/><rect x="2514" y="1059" width="26" height="26" fill="#1b1464"/><rect x="2542" y="1059" width="26" height="26" fill="#662d91"/>
<!-- row 3 -->
<rect x="2178" y="1087" width="26" height="26" fill="#93278f"/><rect x="2206" y="1087" width="26" height="26" fill="#9e005d"/><rect x="2234" y="1087" width="26" height="26" fill="#d4145a"/><rect x="2262" y="1087" width="26" height="26" fill="#ed1e79"/><rect x="2290" y="1087" width="26" height="26" fill="#c7b299"/><rect x="2318" y="1087" width="26" height="26" fill="#998675"/><rect x="2346" y="1087" width="26" height="26" fill="#736357"/><rect x="2374" y="1087" width="26" height="26" fill="#534741"/><rect x="2402" y="1087" width="26" height="26" fill="#c69c6d"/><rect x="2430" y="1087" width="26" height="26" fill="#a67c52"/><rect x="2458" y="1087" width="26" height="26" fill="#8c6239"/><rect x="2486" y="1087" width="26" height="26" fill="#754c24"/><rect x="2514" y="1087" width="26" height="26" fill="#603813"/><rect x="2542" y="1087" width="26" height="26" fill="#42210b"/>
<!-- row 4 -->
<rect x="2178" y="1115" width="26" height="26" fill="url(#g2)"/><rect x="2206" y="1115" width="26" height="26" fill="url(#g3)"/><rect x="2234" y="1115" width="26" height="26" fill="#ee8cb4"/><rect x="2262" y="1115" width="26" height="26" fill="#d97c1e"/><rect x="2290" y="1115" width="26" height="26" fill="#dcdcdc"/><path d="M2292 1131A12 12 0 0 0 2314 1131" fill="none" stroke="#e0b62a" stroke-width="1.5"/><rect x="2318" y="1115" width="26" height="26" fill="#1f5a94"/><path d="M2318 1135L2326 1130L2334 1136L2344 1130V1141H2318Z" fill="#bfd7ea"/><rect x="2346" y="1115" width="26" height="26" fill="#cfe0d8"/><circle cx="2352" cy="1122" r="4" fill="#e4cf80"/><circle cx="2364" cy="1132" r="5" fill="#7fae9c"/><circle cx="2366" cy="1119" r="3.5" fill="#8bbcd8"/><circle cx="2353" cy="1135" r="3.5" fill="#89b37c"/>
<!-- folders -->
<path d="M2180 1152H2191L2195 1156H2202V1169H2180Z" fill="#c0c0c0"/><path d="M2180 1184H2191L2195 1188H2202V1201H2180Z" fill="#c0c0c0"/>
<rect x="2206" y="1147" width="26" height="26" fill="#000"/><rect x="2234" y="1147" width="26" height="26" fill="#1a1a1a"/><rect x="2262" y="1147" width="26" height="26" fill="#333"/><rect x="2290" y="1147" width="26" height="26" fill="#4d4d4d"/><rect x="2318" y="1147" width="26" height="26" fill="#666"/><rect x="2346" y="1147" width="26" height="26" fill="#808080"/><rect x="2374" y="1147" width="26" height="26" fill="#999"/><rect x="2402" y="1147" width="26" height="26" fill="#b3b3b3"/><rect x="2430" y="1147" width="26" height="26" fill="#ccc"/><rect x="2458" y="1147" width="26" height="26" fill="#e6e6e6"/><rect x="2486" y="1147" width="26" height="26" fill="#f2f2f2"/>
<rect x="2206" y="1179" width="26" height="26" fill="#42a9f3"/><rect x="2234" y="1179" width="26" height="26" fill="#7fc94f"/><rect x="2262" y="1179" width="26" height="26" fill="#ff9933"/><rect x="2290" y="1179" width="26" height="26" fill="#ff2233"/><rect x="2318" y="1179" width="26" height="26" fill="#ff7bac"/><rect x="2346" y="1179" width="26" height="26" fill="#bdccd4"/>
<!-- tooltip -->
<rect x="2240" y="1091" width="110" height="40" fill="#c4c4c4"/>
<text x="2254" y="1116" textLength="79" lengthAdjust="spacingAndGlyphs" style="fill:#555;font-size:21px">ホワイト</text>
<!-- popup icons -->
<g class="i"><rect x="2188" y="1218" width="4" height="19"/><rect x="2194" y="1218" width="5" height="19"/><path d="M2200 1218L2204 1217L2209 1236L2205 1237Z"/><path d="M2212 1235H2218L2215 1238Z"/></g>
<circle cx="2252" cy="1228" r="6" class="s"/><circle cx="2252" cy="1228" r="2.5" class="s"/><circle cx="2259" cy="1220" r="3" class="i"/><circle cx="2259" cy="1236" r="3" class="i"/>
<g fill="none" stroke="#7a7a7a" stroke-width="2"><path d="M2295 1231V1216H2318V1238H2304"/><rect x="2301" y="1222" width="10" height="9"/></g><path d="M2292 1235H2302V1231L2308 1236L2302 1240V1238H2292Z" fill="#7a7a7a"/>
<rect x="2344" y="1218" width="20" height="19" class="i"/><g fill="#535353"><rect x="2348" y="1221" width="3" height="3"/><rect x="2356" y="1221" width="3" height="3"/><rect x="2352" y="1226" width="3" height="3"/><rect x="2348" y="1231" width="3" height="3"/><rect x="2356" y="1231" width="3" height="3"/></g>
<path d="M2368 1235H2374L2371 1238Z" class="i"/>
<rect x="2399" y="1218" width="20" height="19" fill="none" stroke="#7a7a7a" stroke-width="2"/><path d="M2403 1223H2415M2403 1228H2415M2403 1233H2415" stroke="#7a7a7a" stroke-width="1.5"/>
<path d="M2448 1218H2459L2463 1222H2474V1237H2448Z" fill="#c4c4c4"/>
<path d="M2504 1218H2524V1237H2513V1228H2504Z" class="i"/><path d="M2504 1230H2511V1237Z" class="i"/>
<path d="M2555 1221H2575M2562 1221V1217H2568V1221M2557 1221L2558 1238H2572L2573 1221M2562 1225V1234M2565 1225V1234M2568 1225V1234" fill="none" stroke="#7a7a7a" stroke-width="2"/>
<g fill="#7a7a7a"><rect x="2627" y="1224" width="2" height="2"/><rect x="2623" y="1228" width="2" height="2"/><rect x="2627" y="1228" width="2" height="2"/><rect x="2619" y="1232" width="2" height="2"/><rect x="2623" y="1232" width="2" height="2"/><rect x="2627" y="1232" width="2" height="2"/><rect x="2615" y="1236" width="2" height="2"/><rect x="2619" y="1236" width="2" height="2"/><rect x="2623" y="1236" width="2" height="2"/><rect x="2627" y="1236" width="2" height="2"/></g>

<!-- red ring -->
<rect x="2544.5" y="943.5" width="100" height="68" rx="22" fill="none" stroke="#fc4420" stroke-width="17"/>
</svg>
</body></html>
